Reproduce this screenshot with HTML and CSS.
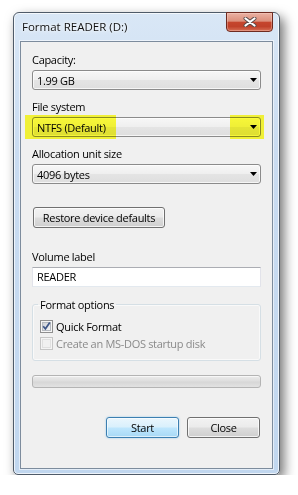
FILE: index.html
```html
<!DOCTYPE html>
<html>
  <head>
    <title>Format READER (D:)</title>
    <link rel="stylesheet" href="styles.css">
  </head>
  <body>
  <div class="window">
    <div class="title-bar">
      <span class="title">Format READER (D:)</span>
      <div class="close-x">
        <svg width="14" height="10" viewBox="0 0 14 10">
          <path d="M2.5 1.5 L11.5 8.5 M11.5 1.5 L2.5 8.5" stroke="#5a4a48" stroke-width="4" stroke-linecap="round"/>
          <path d="M2.5 1.5 L11.5 8.5 M11.5 1.5 L2.5 8.5" stroke="#ffffff" stroke-width="2.2" stroke-linecap="round"/>
        </svg>
      </div>
    </div>

    <div class="panel">
      <p class="label">Capacity:</p>
      <div class="combo">
        <span>1.99 GB</span>
        <svg class="arrow" width="7" height="4" viewBox="0 0 7 4"><polygon points="0,0 7,0 3.5,4" fill="#000"/></svg>
      </div>

      <p class="label">File system</p>
      <div class="combo">
        <span>NTFS (Default)</span>
        <svg class="arrow" width="7" height="4" viewBox="0 0 7 4"><polygon points="0,0 7,0 3.5,4" fill="#000"/></svg>
      </div>

      <p class="label">Allocation unit size</p>
      <div class="combo combo-last">
        <span>4096 bytes</span>
        <svg class="arrow" width="7" height="4" viewBox="0 0 7 4"><polygon points="0,0 7,0 3.5,4" fill="#000"/></svg>
      </div>

      <div class="button restore-button">Restore device defaults</div>

      <p class="label">Volume label</p>
      <div class="text-box">READER</div>

      <fieldset class="group-box">
        <legend class="group-title">Format options</legend>
        <div class="check-row">
          <svg class="check-box" width="13" height="13" viewBox="0 0 13 13">
            <defs>
              <linearGradient id="cb-in" x1="0" y1="0" x2="1" y2="1">
                <stop offset="0" stop-color="#cbcfd5"/>
                <stop offset="1" stop-color="#f6f6f6"/>
              </linearGradient>
            </defs>
            <rect x="0.5" y="0.5" width="12" height="12" fill="#f5f5f5" stroke="#8f8f8f"/>
            <rect x="2.5" y="2.5" width="8" height="8" fill="url(#cb-in)" stroke="#b5b9bf"/>
            <path d="M3.2 6.3 L5.4 8.8 L9.8 2.6" stroke="#3e5687" stroke-width="1.7" fill="none"/>
          </svg>
          <span>Quick Format</span>
        </div>
        <div class="check-row disabled">
          <svg class="check-box" width="13" height="13" viewBox="0 0 13 13">
            <rect x="0.5" y="0.5" width="12" height="12" fill="#f4f4f4" stroke="#c6c6c6"/>
            <rect x="2.5" y="2.5" width="8" height="8" fill="#f1f1f1" stroke="#e0e0e0"/>
          </svg>
          <span>Create an MS-DOS startup disk</span>
        </div>
      </fieldset>

      <div class="progress"></div>

      <div class="button-row">
        <div class="button start-button">Start</div>
        <div class="button">Close</div>
      </div>

      <div class="marker marker-left"></div>
      <div class="marker marker-right"></div>
    </div>
  </div>
  </body>
</html>
```

FILE: styles.css
```css
body {
  margin: 0;
  background-color: white;
  font-family: "Open Sans", "Liberation Sans", sans-serif;
  font-size: 11px;
  letter-spacing: -0.3px;
  color: black;
}
.window {
  box-sizing: border-box;
  width: 267px;
  height: 463px;
  margin: 12px 0 0 13px;
  padding: 0 6px 5px 6px;
  border: 1px solid #4f5b69;
  border-radius: 6px 6px 5px 5px;
  background: linear-gradient(to bottom, #d9e7f6, #cadcf1 30%, #c1d7ef);
  box-shadow: inset 0 0 0 1px rgba(255, 255, 255, 0.7), 4px 5px 12px rgba(0, 0, 0, 0.55);
}
.title-bar {
  display: flex;
  justify-content: space-between;
  align-items: flex-start;
  height: 28px;
}
.title {
  padding-left: 2px;
  font-size: 11.5px;
  letter-spacing: 0;
  line-height: 28px;
  color: #111;
  text-shadow: 0 0 6px white, 0 0 3px white;
}
.close-x {
  box-sizing: border-box;
  display: flex;
  justify-content: center;
  align-items: center;
  width: 47px;
  height: 20px;
  margin-top: -1px;
  border: 1px solid #6e2a20;
  border-radius: 0 0 4px 4px;
  background: linear-gradient(to bottom, #eab1a3, #dc907c 45%, #c5452d 52%, #c0412a 75%, #d66e54);
  box-shadow: inset 0 0 0 1px rgba(255, 220, 210, 0.35);
}
.panel {
  position: relative;
  box-sizing: border-box;
  height: 428px;
  padding: 10px 11px 0 11px;
  border: 1px solid #7d8c9d;
  background-color: #f0f0f0;
  box-shadow: 0 0 0 1px rgba(255, 255, 255, 0.55);
}
.label {
  margin: 0 0 3px 0;
  line-height: 15px;
}
.combo {
  box-sizing: border-box;
  display: flex;
  justify-content: space-between;
  align-items: center;
  height: 20px;
  margin-bottom: 9px;
  padding: 0 3px 0 4px;
  border: 1px solid #8b8b8b;
  border-radius: 3px;
  background: linear-gradient(to bottom, #f7f7f7, #efefef 48%, #e4e4e4 52%, #dedede);
  box-shadow: inset 0 0 0 1px rgba(255, 255, 255, 0.7);
}
.combo-last {
  margin-bottom: 23px;
}
.button {
  box-sizing: border-box;
  display: flex;
  justify-content: center;
  align-items: center;
  width: 73px;
  height: 21px;
  border: 1px solid #707070;
  border-radius: 3px;
  background: linear-gradient(to bottom, #f2f2f2, #ebebeb 48%, #dddddd 52%, #cfcfcf);
  box-shadow: inset 0 0 0 1px rgba(255, 255, 255, 0.75);
}
.restore-button {
  width: 132px;
  margin: 0 0 21px 1px;
}
.text-box {
  box-sizing: border-box;
  height: 20px;
  margin-bottom: 10px;
  padding-left: 4px;
  line-height: 18px;
  background-color: white;
  border: 1px solid #dbdfe6;
  border-top-color: #abadb3;
  border-left-color: #e2e3ea;
  border-right-color: #e2e3ea;
  border-bottom-color: #e3e9ef;
}
.group-box {
  margin: 0;
  padding: 0 0 8px 5px;
  border: 1px solid #d5dfe5;
  border-radius: 3px;
  box-shadow: inset 0 0 0 1px rgba(255, 255, 255, 0.6);
}
.group-title {
  padding: 0 2px;
  line-height: 15px;
}
.check-row {
  display: flex;
  align-items: center;
  gap: 3px;
  height: 17px;
  padding-left: 2px;
}
.group-title + .check-row {
  margin-top: 6px;
}
.disabled {
  color: #8a8a8a;
}
.progress {
  box-sizing: border-box;
  height: 13px;
  margin: 14px 0 29px 0;
  border: 1px solid #b4b4b4;
  border-radius: 3px;
  background: linear-gradient(to bottom, #ececec, #dedede 45%, #d7d7d7 55%, #e2e2e2);
  box-shadow: inset 0 1px 0 rgba(255, 255, 255, 0.6);
}
.button-row {
  display: flex;
  justify-content: flex-end;
  gap: 8px;
  padding-right: 1px;
}
.start-button {
  border-color: #3c7fb1;
  background: linear-gradient(to bottom, #eaf6fd, #d9f0fc 48%, #bee6fd 52%, #a7d9f5);
  box-shadow: inset 0 0 0 1px rgba(255, 255, 255, 0.6), 0 0 2px rgba(80, 170, 230, 0.6);
}
.marker {
  position: absolute;
  top: 73px;
  height: 24px;
  background-color: #ffff3a;
  mix-blend-mode: multiply;
}
.marker-left {
  left: 4px;
  width: 91px;
}
.marker-right {
  left: 209px;
  width: 34px;
}
```
